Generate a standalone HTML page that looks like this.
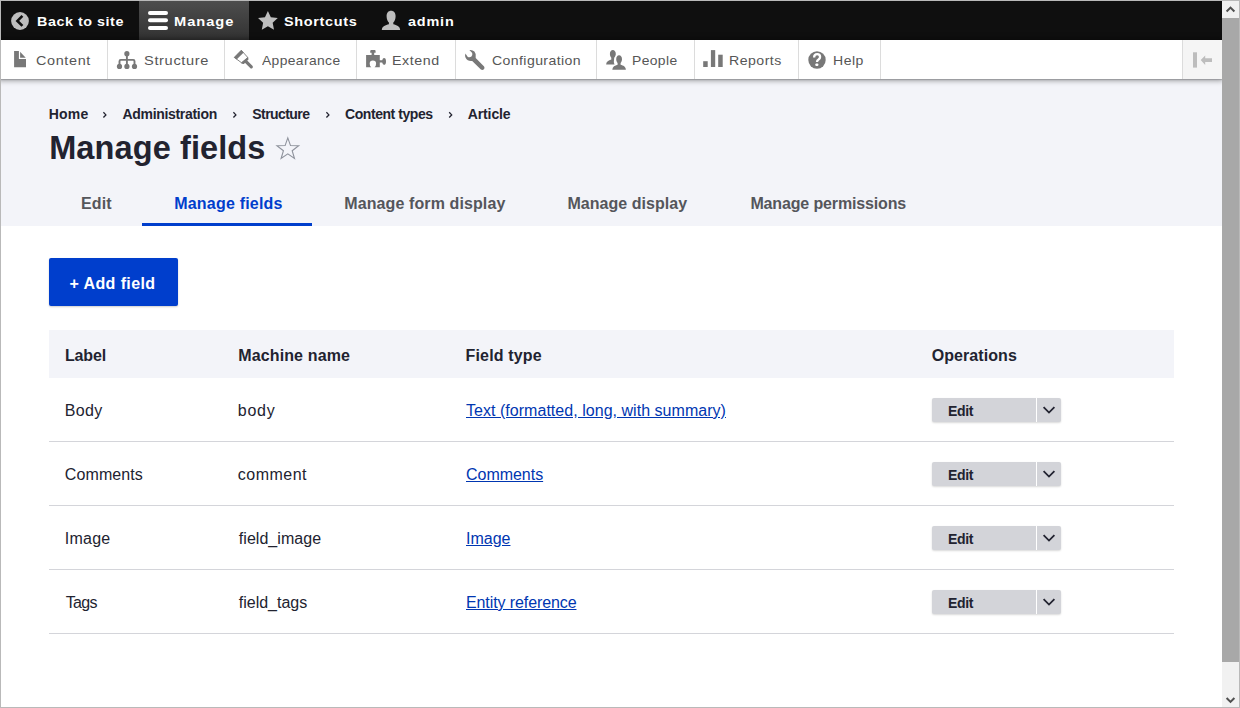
<!DOCTYPE html>
<html><head><meta charset="utf-8">
<style>
*{box-sizing:border-box;margin:0;padding:0}
html,body{width:1240px;height:708px;overflow:hidden;background:#fff}
body{position:relative;font-family:"Liberation Sans",sans-serif;color:#222330}
.a{position:absolute}
.t{position:absolute;white-space:pre;font-family:"Liberation Sans",sans-serif}
</style></head>
<body>
<div class="a" style="left:1px;top:1px;width:1221px;height:39px;background:#0f0f0f"></div>
<div class="a" style="left:139px;top:1px;width:110px;height:39px;background:linear-gradient(#4d4d4d,#323232)"></div>
<div class="a" style="left:1px;top:79px;width:1221px;height:147px;background:#f3f4f9"></div>
<div class="a" style="left:1px;top:40px;width:1221px;height:39px;background:#fff;box-shadow:-1px 0 5px 2px rgba(0,0,0,.3333),0 1px 1px rgba(0,0,0,.15)"></div>
<div class="a" style="left:107px;top:40px;width:1px;height:39px;background:#dcdcdc"></div><div class="a" style="left:224px;top:40px;width:1px;height:39px;background:#dcdcdc"></div><div class="a" style="left:356px;top:40px;width:1px;height:39px;background:#dcdcdc"></div><div class="a" style="left:455px;top:40px;width:1px;height:39px;background:#dcdcdc"></div><div class="a" style="left:596px;top:40px;width:1px;height:39px;background:#dcdcdc"></div><div class="a" style="left:694px;top:40px;width:1px;height:39px;background:#dcdcdc"></div><div class="a" style="left:798px;top:40px;width:1px;height:39px;background:#dcdcdc"></div><div class="a" style="left:880px;top:40px;width:1px;height:39px;background:#dcdcdc"></div>
<div class="a" style="left:1182px;top:40px;width:40px;height:39px;background:#f5f5f5;border-left:1px solid #dcdcdc"></div>
<svg class="a" style="left:0;top:90px" width="1240" height="90" viewBox="0 90 1240 90">
 <polygon points="287.80,137.90 290.50,145.58 298.64,145.78 292.17,150.72 294.50,158.52 287.80,153.90 281.10,158.52 283.43,150.72 276.96,145.78 285.10,145.58" fill="none" stroke="#8e929c" stroke-width="1.1" stroke-linejoin="miter"/>
</svg>
<svg class="a" style="left:0;top:0" width="1240" height="130" viewBox="0 0 1240 130"><polyline points="103.4,112.3 105.9,114.9 103.4,117.5" fill="none" stroke="#222330" stroke-width="1.3"/><polyline points="233.4,112.3 235.9,114.9 233.4,117.5" fill="none" stroke="#222330" stroke-width="1.3"/><polyline points="326.4,112.3 328.9,114.9 326.4,117.5" fill="none" stroke="#222330" stroke-width="1.3"/><polyline points="449.2,112.3 451.7,114.9 449.2,117.5" fill="none" stroke="#222330" stroke-width="1.3"/></svg>
<div class="a" style="left:142px;top:223px;width:170px;height:3px;background:#003ecc"></div>
<div class="a" style="left:49px;top:258px;width:129px;height:48px;background:#003ecc;border-radius:2px;box-shadow:0 1px 2px rgba(0,0,0,.2)"></div>
<div class="a" style="left:49px;top:330px;width:1125px;height:48px;background:#f3f4f9"></div>
<div class="a" style="left:49px;top:441px;width:1125px;height:1px;background:#d4d5da"></div><div class="a" style="left:49px;top:505px;width:1125px;height:1px;background:#d4d5da"></div><div class="a" style="left:49px;top:569px;width:1125px;height:1px;background:#d4d5da"></div><div class="a" style="left:49px;top:633px;width:1125px;height:1px;background:#d4d5da"></div>
<div class="a" style="left:932px;top:398px;width:129px;height:24px;background:#d3d4d9;border-radius:2px;box-shadow:0 1px 2px rgba(0,0,0,.15)"></div><div class="a" style="left:1036px;top:398px;width:1px;height:24px;background:#fff"></div><svg class="a" style="left:1040px;top:398px" width="20" height="24" viewBox="0 0 20 24"><polyline points="3.6,9.2 9,14.6 14.4,9.2" fill="none" stroke="#222330" stroke-width="1.8"/></svg><div class="a" style="left:932px;top:462px;width:129px;height:24px;background:#d3d4d9;border-radius:2px;box-shadow:0 1px 2px rgba(0,0,0,.15)"></div><div class="a" style="left:1036px;top:462px;width:1px;height:24px;background:#fff"></div><svg class="a" style="left:1040px;top:462px" width="20" height="24" viewBox="0 0 20 24"><polyline points="3.6,9.2 9,14.6 14.4,9.2" fill="none" stroke="#222330" stroke-width="1.8"/></svg><div class="a" style="left:932px;top:526px;width:129px;height:24px;background:#d3d4d9;border-radius:2px;box-shadow:0 1px 2px rgba(0,0,0,.15)"></div><div class="a" style="left:1036px;top:526px;width:1px;height:24px;background:#fff"></div><svg class="a" style="left:1040px;top:526px" width="20" height="24" viewBox="0 0 20 24"><polyline points="3.6,9.2 9,14.6 14.4,9.2" fill="none" stroke="#222330" stroke-width="1.8"/></svg><div class="a" style="left:932px;top:590px;width:129px;height:24px;background:#d3d4d9;border-radius:2px;box-shadow:0 1px 2px rgba(0,0,0,.15)"></div><div class="a" style="left:1036px;top:590px;width:1px;height:24px;background:#fff"></div><svg class="a" style="left:1040px;top:590px" width="20" height="24" viewBox="0 0 20 24"><polyline points="3.6,9.2 9,14.6 14.4,9.2" fill="none" stroke="#222330" stroke-width="1.8"/></svg>

<svg class="a" style="left:0;top:0" width="1240" height="90" viewBox="0 0 1240 90">
 <!-- back -->
 <circle cx="20" cy="21" r="8.9" fill="#bebebe"/>
 <polyline points="22.4,15.9 17.4,20.9 22.4,25.9" fill="none" stroke="#0f0f0f" stroke-width="2.6" stroke-linecap="butt" stroke-linejoin="miter"/>
 <!-- hamburger -->
 <rect x="148" y="11" width="20" height="4" rx="2" fill="#fff"/>
 <rect x="148" y="18.3" width="20" height="4" rx="2" fill="#fff"/>
 <rect x="148" y="26" width="20" height="4" rx="2" fill="#fff"/>
 <!-- star -->
 <polygon points="267.90,10.90 270.84,17.25 277.79,18.09 272.66,22.85 274.01,29.71 267.90,26.30 261.79,29.71 263.14,22.85 258.01,18.09 264.96,17.25" fill="#bebebe"/>
 <!-- user -->
 <path d="M391.1,10.8 C388.3,10.8 386.6,13 386.6,16.3 C386.6,19 387.6,21.3 388.9,22.6 L388.9,24.3 C385.6,25.1 382,26.4 381.8,29.9 L400.2,29.9 C400,26.4 396.5,25.1 393.3,24.3 L393.3,22.6 C394.6,21.3 395.6,19 395.6,16.3 C395.6,13 393.9,10.8 391.1,10.8 Z" fill="#bebebe"/>
 <!-- content doc -->
 <path d="M14.1,51.1 L18.9,51.1 L18.9,59 L26,59 L26,67.3 L14.1,67.3 Z" fill="#787878"/>
 <path d="M20.1,51.7 L25.7,57.7 L20.1,57.7 Z" fill="#787878"/>
 <!-- structure -->
 <g fill="#787878">
  <circle cx="126.9" cy="53.7" r="2.6"/>
  <circle cx="119.5" cy="66.4" r="2.6"/>
  <circle cx="126.9" cy="66.4" r="2.6"/>
  <circle cx="134.5" cy="66.4" r="2.6"/>
 </g>
 <path d="M126.9,54 L126.9,66 M119.5,66 L119.5,61.2 Q119.5,59.9 120.8,59.9 L133.2,59.9 Q134.5,59.9 134.5,61.2 L134.5,66" fill="none" stroke="#787878" stroke-width="1.9"/>
 <!-- appearance brush -->
 <path d="M241.3,50.3 L234.3,57.4 L241.6,62.8 L247.9,57.6 Z" fill="none" stroke="#787878" stroke-width="0.9" stroke-linejoin="round"/>
 <path d="M241.3,50.0 L234.0,57.4 L236.6,59.4 L243.7,52.4 Z" fill="#787878"/>
 <path d="M241.0,62.7 L247.9,56.9 L248.6,59.3 L243.9,64.0 Q242.2,64.4 241.0,62.7 Z" fill="#787878"/>
 <path d="M245.8,61.4 L251.3,66.9" stroke="#787878" stroke-width="3.2" stroke-linecap="round"/>
 <!-- extend puzzle -->
 <path d="M366.1,55.1 L371.6,55.1 L371.6,52.7 L370.2,52.7 Q369.9,50.1 371,50.1 L375,50.1 Q375.9,50.1 375.6,52.7 L374.2,52.7 L374.2,55.1 L379.8,55.1 L379.8,60.2 L382.2,60.2 Q382.8,58 384,58 Q386,58 386,61.4 Q386,64.8 384,64.8 Q382.8,64.8 382.2,62.6 L379.8,62.6 L379.8,67.3 L374.5,67.3 Q376.1,66.5 376.1,63.6 Q376.1,60.4 372.9,60.4 Q369.7,60.4 369.7,63.6 Q369.7,66.5 371.3,67.3 L366.1,67.3 Z" fill="#787878"/>
 <!-- wrench -->
 <path d="M465.4,53.4 Q464.7,55.6 465.6,57.8 Q467.6,61.6 472.2,61 L480.9,69.6 Q482.6,70.7 483.9,69.3 Q485.1,67.9 484.1,66.4 L475.7,57.9 Q476.5,53.9 474.4,51.6 Q472.6,49.6 469.4,50 L472.2,52.9 Q472.9,55.3 471.2,56.8 Q469.2,57.7 467.6,56.7 Z" fill="#787878"/>
 <!-- people -->
 <path d="M612.8,50.1 C611,50.1 609.9,51.8 609.9,54 C609.9,55.5 610.5,56.9 611.3,57.7 L611.3,59.6 C608.6,60.3 606.3,61.6 606.1,64.6 L614.6,64.6 C613.9,63.3 613.7,61.8 614,60.3 L614.2,57.7 C615,56.9 615.8,55.5 615.8,54 C615.8,51.8 614.6,50.1 612.8,50.1 Z" fill="#787878"/>
 <path d="M619.1,55.3 C617.3,55.3 616.2,57 616.2,59.2 C616.2,60.7 616.8,62.1 617.6,62.9 L617.6,64.8 C614.9,65.5 612.5,66.7 612.3,69.7 L625.9,69.7 C625.7,66.7 623.3,65.5 620.6,64.8 L620.6,62.9 C621.4,62.1 622,60.7 622,59.2 C622,57 620.9,55.3 619.1,55.3 Z" fill="#787878"/>
 <!-- reports -->
 <rect x="703.2" y="61.2" width="4.5" height="5.8" fill="#787878"/>
 <rect x="710.9" y="50.1" width="4.3" height="16.9" fill="#787878"/>
 <rect x="718.2" y="54.7" width="4.5" height="12.3" fill="#787878"/>
 <!-- help -->
 <circle cx="817" cy="60" r="8.7" fill="#787878"/>
 <path d="M814.1,57.6 Q814.1,54.1 817.2,54.1 Q820.1,54.1 820.1,56.9 Q820.1,58.4 818.5,59.5 Q817,60.4 817,62.1" fill="none" stroke="#fff" stroke-width="2.3"/>
 <rect x="815.4" y="63.4" width="2.9" height="2.6" rx="0.8" fill="#fff"/>
 <!-- toggle -->
 <rect x="1193" y="52.3" width="4" height="15.3" fill="#bdbdbd"/>
 <path d="M1200.7,60.1 L1205.2,55.4 L1205.2,58.2 L1212,58.2 L1212,62.1 L1205.2,62.1 L1205.2,64.9 Z" fill="#bdbdbd"/>
</svg>
<span class="t" style="left:36.60px;top:15px;font-size:13px;line-height:13px;font-weight:700;color:#fff;letter-spacing:0.480px;transform:scaleX(1.1038);transform-origin:0 0;">Back to site</span>
<span class="t" style="left:174.37px;top:15px;font-size:13px;line-height:13px;font-weight:700;color:#fff;letter-spacing:0.848px;transform:scaleX(1.1266);transform-origin:0 0;">Manage</span>
<span class="t" style="left:283.89px;top:15px;font-size:13px;line-height:13px;font-weight:700;color:#fff;letter-spacing:0.585px;transform:scaleX(1.1120);transform-origin:0 0;">Shortcuts</span>
<span class="t" style="left:408.30px;top:15px;font-size:13px;line-height:13px;font-weight:700;color:#fff;letter-spacing:0.730px;transform:scaleX(1.1097);transform-origin:0 0;">admin</span>
<span class="t" style="left:36.49px;top:54px;font-size:13px;line-height:13px;font-weight:400;color:#565656;letter-spacing:0.573px;transform:scaleX(1.1088);transform-origin:0 0;">Content</span>
<span class="t" style="left:143.67px;top:54px;font-size:13px;line-height:13px;font-weight:400;color:#565656;letter-spacing:0.570px;transform:scaleX(1.1254);transform-origin:0 0;">Structure</span>
<span class="t" style="left:261.50px;top:54px;font-size:13px;line-height:13px;font-weight:400;color:#565656;letter-spacing:0.351px;transform:scaleX(1.0657);transform-origin:0 0;">Appearance</span>
<span class="t" style="left:392.21px;top:54px;font-size:13px;line-height:13px;font-weight:400;color:#565656;letter-spacing:0.512px;transform:scaleX(1.0947);transform-origin:0 0;">Extend</span>
<span class="t" style="left:491.62px;top:54px;font-size:13px;line-height:13px;font-weight:400;color:#565656;letter-spacing:0.370px;transform:scaleX(1.0838);transform-origin:0 0;">Configuration</span>
<span class="t" style="left:631.93px;top:54px;font-size:13px;line-height:13px;font-weight:400;color:#565656;letter-spacing:0.360px;transform:scaleX(1.0678);transform-origin:0 0;">People</span>
<span class="t" style="left:728.91px;top:54px;font-size:13px;line-height:13px;font-weight:400;color:#565656;letter-spacing:0.440px;transform:scaleX(1.0868);transform-origin:0 0;">Reports</span>
<span class="t" style="left:832.92px;top:54px;font-size:13px;line-height:13px;font-weight:400;color:#565656;letter-spacing:0.453px;transform:scaleX(1.0804);transform-origin:0 0;">Help</span>
<span class="t" style="left:48.80px;top:107px;font-size:14px;line-height:14px;font-weight:700;color:#222330;letter-spacing:0.167px;">Home</span>
<span class="t" style="left:122.50px;top:107px;font-size:14px;line-height:14px;font-weight:700;color:#222330;letter-spacing:-0.315px;">Administration</span>
<span class="t" style="left:252.30px;top:107px;font-size:14px;line-height:14px;font-weight:700;color:#222330;letter-spacing:-0.575px;">Structure</span>
<span class="t" style="left:345.10px;top:107px;font-size:14px;line-height:14px;font-weight:700;color:#222330;letter-spacing:-0.450px;">Content types</span>
<span class="t" style="left:467.80px;top:107px;font-size:14px;line-height:14px;font-weight:700;color:#222330;letter-spacing:-0.133px;">Article</span>
<span class="t" style="left:49.20px;top:132px;font-size:32.5px;line-height:32.5px;font-weight:700;color:#222330;letter-spacing:0.108px;">Manage fields</span>
<span class="t" style="left:81.10px;top:196px;font-size:16px;line-height:16px;font-weight:700;color:#55565b;letter-spacing:0.067px;">Edit</span>
<span class="t" style="left:174.20px;top:196px;font-size:16px;line-height:16px;font-weight:700;color:#003ecc;letter-spacing:0.208px;">Manage fields</span>
<span class="t" style="left:344.20px;top:196px;font-size:16px;line-height:16px;font-weight:700;color:#55565b;letter-spacing:0.111px;">Manage form display</span>
<span class="t" style="left:567.50px;top:196px;font-size:16px;line-height:16px;font-weight:700;color:#55565b;letter-spacing:0.038px;">Manage display</span>
<span class="t" style="left:750.40px;top:196px;font-size:16px;line-height:16px;font-weight:700;color:#55565b;letter-spacing:-0.141px;">Manage permissions</span>
<span class="t" style="left:69.50px;top:276px;font-size:16px;line-height:16px;font-weight:700;color:#fff;letter-spacing:0.400px;">+ Add field</span>
<span class="t" style="left:64.90px;top:348px;font-size:16px;line-height:16px;font-weight:700;color:#222330;letter-spacing:-0.100px;">Label</span>
<span class="t" style="left:238.20px;top:348px;font-size:16px;line-height:16px;font-weight:700;color:#222330;letter-spacing:0.136px;">Machine name</span>
<span class="t" style="left:465.60px;top:348px;font-size:16px;line-height:16px;font-weight:700;color:#222330;letter-spacing:0.144px;">Field type</span>
<span class="t" style="left:931.70px;top:348px;font-size:16px;line-height:16px;font-weight:700;color:#222330;letter-spacing:0.078px;">Operations</span>
<span class="t" style="left:64.80px;top:403px;font-size:16px;line-height:16px;font-weight:400;color:#222330;letter-spacing:0.367px;">Body</span>
<span class="t" style="left:237.80px;top:403px;font-size:16px;line-height:16px;font-weight:400;color:#222330;letter-spacing:0.733px;">body</span>
<span class="t" style="left:466.00px;top:403px;font-size:16px;line-height:16px;font-weight:400;color:#0036b1;letter-spacing:0.034px;text-decoration:underline;">Text (formatted, long, with summary)</span>
<span class="t" style="left:947.90px;top:404px;font-size:14px;line-height:14px;font-weight:700;color:#222330;letter-spacing:-0.267px;">Edit</span>
<span class="t" style="left:64.80px;top:467px;font-size:16px;line-height:16px;font-weight:400;color:#222330;letter-spacing:0.100px;">Comments</span>
<span class="t" style="left:237.80px;top:467px;font-size:16px;line-height:16px;font-weight:400;color:#222330;letter-spacing:0.483px;">comment</span>
<span class="t" style="left:466.00px;top:467px;font-size:16px;line-height:16px;font-weight:400;color:#0036b1;letter-spacing:-0.029px;text-decoration:underline;">Comments</span>
<span class="t" style="left:947.90px;top:468px;font-size:14px;line-height:14px;font-weight:700;color:#222330;letter-spacing:-0.267px;">Edit</span>
<span class="t" style="left:64.80px;top:531px;font-size:16px;line-height:16px;font-weight:400;color:#222330;letter-spacing:0.250px;">Image</span>
<span class="t" style="left:238.80px;top:531px;font-size:16px;line-height:16px;font-weight:400;color:#222330;letter-spacing:0.040px;">field_image</span>
<span class="t" style="left:466.00px;top:531px;font-size:16px;line-height:16px;font-weight:400;color:#0036b1;letter-spacing:0.000px;text-decoration:underline;">Image</span>
<span class="t" style="left:947.90px;top:532px;font-size:14px;line-height:14px;font-weight:700;color:#222330;letter-spacing:-0.267px;">Edit</span>
<span class="t" style="left:65.80px;top:595px;font-size:16px;line-height:16px;font-weight:400;color:#222330;letter-spacing:-0.733px;">Tags</span>
<span class="t" style="left:238.80px;top:595px;font-size:16px;line-height:16px;font-weight:400;color:#222330;letter-spacing:-0.011px;">field_tags</span>
<span class="t" style="left:466.00px;top:595px;font-size:16px;line-height:16px;font-weight:400;color:#0036b1;letter-spacing:-0.100px;text-decoration:underline;">Entity reference</span>
<span class="t" style="left:947.90px;top:596px;font-size:14px;line-height:14px;font-weight:700;color:#222330;letter-spacing:-0.267px;">Edit</span>
<div class="a" style="left:1222px;top:1px;width:17px;height:706px;background:#f1f1f1"></div>
<div class="a" style="left:1222px;top:18px;width:17px;height:644px;background:#a8a8a8"></div>
<svg class="a" style="left:1222px;top:1px" width="17" height="706" viewBox="0 0 17 706">
 <polyline points="4.6,10.5 8.5,6.6 12.4,10.5" fill="none" stroke="#505050" stroke-width="2"/>
 <polyline points="4.6,697 8.5,700.9 12.4,697" fill="none" stroke="#505050" stroke-width="2"/>
</svg>
<div class="a" style="left:0;top:0;width:1240px;height:708px;border:1px solid #b9b9b9"></div>
</body></html>
